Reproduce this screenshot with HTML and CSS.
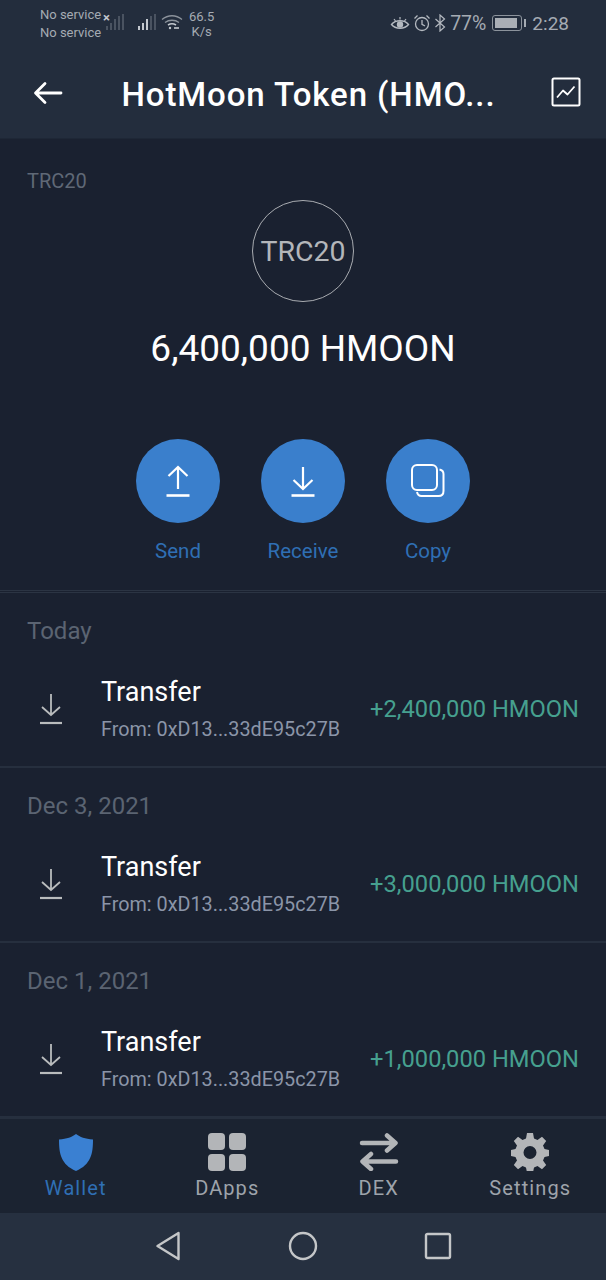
FILE: index.html
```html
<!DOCTYPE html>
<html lang="en">
<head>
  <meta charset="UTF-8" />
  <meta name="viewport" content="width=device-width, initial-scale=1.0" />
  <title>HotMoon Token</title>
  <link rel="stylesheet" href="styles.css">
</head>
<body>
  <div class="phone">
    <header class="top">
      <div class="status-bar">
        <div class="status-left">
          <div class="carrier">
            <span>No service</span>
            <span>No service</span>
          </div>
          <span class="no-sim">×</span>
          <svg class="signal signal-off" viewBox="0 0 20 18" width="20" height="18">
            <rect x="1" y="13" width="2" height="4"/><rect x="5" y="10" width="2" height="7"/><rect x="9" y="6" width="2" height="11"/><rect x="13" y="3" width="2" height="14"/><rect x="17" y="1" width="2" height="16"/>
          </svg>
          <svg class="signal" viewBox="0 0 20 18" width="20" height="18">
            <rect x="1" y="13" width="2" height="4" fill="#c3c8cf"/><rect x="5" y="10" width="2" height="7" fill="#c3c8cf"/><rect x="9" y="6" width="2" height="11" fill="#c3c8cf"/><rect x="13" y="3" width="2" height="14"/><rect x="17" y="1" width="2" height="16"/>
          </svg>
          <svg class="wifi" viewBox="0 0 24 18" width="24" height="18" fill="none" stroke="#8c939c" stroke-width="1.3">
            <path d="M2 6.500c6-5 14-5 20 0"/>
            <path d="M5 9.500c4-3 10-3 14 0"/>
            <path d="M8 12c2.500-1.500 5.500-1.500 8 0" stroke="#c3c8cf" stroke-width="1.600"/>
            <circle cx="10" cy="15" r="1.200" fill="#c3c8cf" stroke="none"/>
            <path d="M14 15h5" stroke="#c3c8cf" stroke-width="1.600"/>
          </svg>
          <div class="speed">
            <span>66.5</span>
            <span>K/s</span>
          </div>
        </div>
        <div class="status-right">
          <svg viewBox="0 0 20 16" width="20" height="16" fill="none" stroke="#b4b9c0" stroke-width="1.400">
            <path d="M1.500 9.500c4-5 13-5 17 0c-4 5-13 5-17 0z"/>
            <circle cx="10" cy="9.500" r="3.200" fill="#b4b9c0" stroke="none"/>
            <path d="M4 4l1.500 2M10 2v2.500M16 4l-1.500 2" stroke-width="1.200"/>
          </svg>
          <svg viewBox="0 0 18 18" width="18" height="18" fill="none" stroke="#b4b9c0" stroke-width="1.300">
            <circle cx="9" cy="10" r="6.500"/>
            <path d="M9 6v4.300l3 1.700"/>
            <path d="M1.500 4.500l3-3M16.500 4.500l-3-3"/>
          </svg>
          <svg viewBox="0 0 12 18" width="12" height="18" fill="none" stroke="#b4b9c0" stroke-width="1.200">
            <path d="M1.500 5l9 8-4.500 4V1l4.500 4-9 8"/>
          </svg>
          <span class="battery-pct">77%</span>
          <div class="battery"><div class="battery-level"></div></div>
          <div class="battery-tip"></div>
          <span class="clock">2:28</span>
        </div>
      </div>
      <div class="title-bar">
        <svg class="back" viewBox="0 0 30 24" width="30" height="24" fill="none" stroke="#fff" stroke-width="2.800" stroke-linecap="round" stroke-linejoin="round">
          <path d="M28 12H3M12 2.500L2.500 12l9.500 9.500"/>
        </svg>
        <h1>HotMoon Token (HMO...</h1>
        <svg class="chart" viewBox="0 0 30 30" width="30" height="30" fill="none" stroke="#fff" stroke-width="2" stroke-linejoin="round">
          <rect x="1.500" y="1.500" width="27" height="27" rx="1.500"/>
          <path d="M6 20.500l6-7 4.500 4 7-8" stroke-width="1.800"/>
        </svg>
      </div>
    </header>

    <main class="content">
      <section class="summary">
        <div class="network">TRC20</div>
        <div class="coin">TRC20</div>
        <div class="balance">6,400,000 HMOON</div>
        <div class="actions">
          <div class="action">
            <div class="action-circle">
              <svg viewBox="0 0 26 34" width="26" height="34" fill="none" stroke="#fff" stroke-width="2.200">
                <path d="M13 25V3M3.500 12L13 3l9.500 9"/>
                <path d="M1.500 31.500h23" stroke-width="2.600"/>
              </svg>
            </div>
            <span>Send</span>
          </div>
          <div class="action">
            <div class="action-circle">
              <svg viewBox="0 0 26 34" width="26" height="34" fill="none" stroke="#fff" stroke-width="2.200">
                <path d="M13 3v22M3.500 16l9.500 9 9.500-9"/>
                <path d="M1.500 31.500h23" stroke-width="2.600"/>
              </svg>
            </div>
            <span>Receive</span>
          </div>
          <div class="action">
            <div class="action-circle">
              <svg viewBox="0 0 36 36" width="36" height="36" fill="none" stroke="#fff" stroke-width="2">
                <rect x="2" y="2" width="25" height="25" rx="5"/>
                <path d="M29.500 6.500c2.500.5 4 2 4 4.500v17c0 3-2 5-5 5h-17c-2.500 0-4-1.500-4.500-4"/>
              </svg>
            </div>
            <span>Copy</span>
          </div>
        </div>
      </section>

      <section class="day">
        <div class="day-label">Today</div>
        <div class="tx">
          <svg class="tx-icon" viewBox="0 0 24 34" width="24" height="34" fill="none" stroke="#b9bcbd" stroke-width="1.800">
            <path d="M12 2v21M3 15l9 8 9-8"/>
            <path d="M1 31h22" stroke-width="2.200"/>
          </svg>
          <div class="tx-text">
            <div class="tx-title">Transfer</div>
            <div class="tx-from">From: 0xD13...33dE95c27B</div>
          </div>
          <div class="tx-amount">+2,400,000 HMOON</div>
        </div>
      </section>

      <section class="day">
        <div class="day-label">Dec 3, 2021</div>
        <div class="tx">
          <svg class="tx-icon" viewBox="0 0 24 34" width="24" height="34" fill="none" stroke="#b9bcbd" stroke-width="1.800">
            <path d="M12 2v21M3 15l9 8 9-8"/>
            <path d="M1 31h22" stroke-width="2.200"/>
          </svg>
          <div class="tx-text">
            <div class="tx-title">Transfer</div>
            <div class="tx-from">From: 0xD13...33dE95c27B</div>
          </div>
          <div class="tx-amount">+3,000,000 HMOON</div>
        </div>
      </section>

      <section class="day">
        <div class="day-label">Dec 1, 2021</div>
        <div class="tx">
          <svg class="tx-icon" viewBox="0 0 24 34" width="24" height="34" fill="none" stroke="#b9bcbd" stroke-width="1.800">
            <path d="M12 2v21M3 15l9 8 9-8"/>
            <path d="M1 31h22" stroke-width="2.200"/>
          </svg>
          <div class="tx-text">
            <div class="tx-title">Transfer</div>
            <div class="tx-from">From: 0xD13...33dE95c27B</div>
          </div>
          <div class="tx-amount">+1,000,000 HMOON</div>
        </div>
      </section>
    </main>

    <nav class="tabs">
      <div class="tab tab-active">
        <svg viewBox="0 0 36 38" width="36" height="38">
          <path d="M18 1c4 3 9 5 17 5.500c0 14-2 25-17 31.500C3 31.500 1 20.500 1 6.500C9 6 14 4 18 1z" fill="#3a80d2"/>
        </svg>
        <span>Wallet</span>
      </div>
      <div class="tab">
        <svg viewBox="0 0 38 38" width="38" height="38" fill="#b3b5b8">
          <rect x="0" y="0" width="17" height="17" rx="4"/><rect x="21" y="0" width="17" height="17" rx="4"/>
          <rect x="0" y="21" width="17" height="17" rx="4"/><rect x="21" y="21" width="17" height="17" rx="4"/>
        </svg>
        <span>DApps</span>
      </div>
      <div class="tab">
        <svg viewBox="0 0 40 38" width="40" height="38" fill="none" stroke="#b3b5b8" stroke-width="4.500" stroke-linecap="round" stroke-linejoin="round">
          <path d="M3 10h33M28 2.500L36.500 10 28 17.500"/>
          <path d="M37 28.500H4M12 21l-8.500 7.500L12 36"/>
        </svg>
        <span>DEX</span>
      </div>
      <div class="tab">
        <svg viewBox="0 0 38 38" width="38" height="38">
          <path fill="#b3b5b8" fill-rule="evenodd" d="M16 0h6l1 5.500 3.500 1.500 4.500-3.200 4.200 4.200L32 12.500l1.500 3.500 4.500 1v6l-4.500 1-1.500 3.500 3.200 4.500-4.200 4.200-4.500-3.200-3.500 1.500-1 5h-6l-1-5-3.500-1.500-4.500 3.200-4.200-4.200L6 27.500 4.500 24 0 23v-6l4.500-1L6 12.500 2.800 8l4.200-4.200L11.500 7 15 5.500zM19 13a6.500 6.500 0 1 0 0 13 6.500 6.500 0 0 0 0-13z"/>
        </svg>
        <span>Settings</span>
      </div>
    </nav>

    <footer class="android-nav">
      <svg viewBox="0 0 26 30" width="26" height="30" fill="none" stroke="#c4c6c8" stroke-width="2.400" stroke-linejoin="round">
        <path d="M23.500 2L2.500 15l21 13z"/>
      </svg>
      <svg viewBox="0 0 30 30" width="30" height="30" fill="none" stroke="#c4c6c8" stroke-width="2.400">
        <circle cx="15" cy="15" r="13"/>
      </svg>
      <svg viewBox="0 0 28 28" width="28" height="28" fill="none" stroke="#c4c6c8" stroke-width="2.400" stroke-linejoin="round">
        <rect x="2" y="2" width="24" height="24" rx="1.500"/>
      </svg>
    </footer>
  </div>
</body>
</html>
```

FILE: styles.css
```css
* {
  box-sizing: border-box;
}

body {
  margin: 0;
  background-color: #1a2130;
  font-family: Roboto, "Liberation Sans", sans-serif;
  overflow: hidden;
}

.phone {
  width: 606px;
  height: 1280px;
  display: flex;
  flex-direction: column;
}

/* top bars */
.top {
  height: 139px;
  flex-shrink: 0;
  background-color: #232d3d;
  border-bottom: 1px solid #1e2736;
}

.status-bar {
  height: 46px;
  padding: 6px 37px 0 40px;
  display: flex;
  justify-content: space-between;
}

.status-left {
  display: flex;
  align-items: flex-start;
}

.carrier {
  display: flex;
  flex-direction: column;
  font-size: 13px;
  line-height: 18px;
  color: #a5abb3;
  width: 63px;
  white-space: nowrap;
}

.no-sim {
  font-size: 13px;
  font-weight: bold;
  line-height: 18px;
  margin-top: 3px;
  color: #c3c8cf;
}

.signal {
  fill: #4a5361;
  margin-top: 7px;
}

.signal-off {
  margin-left: -5px;
  margin-right: 12px;
}

.wifi {
  margin: 7px 0 0 3px;
}

.speed {
  display: flex;
  flex-direction: column;
  align-items: center;
  margin: 3px 0 0 5px;
  font-size: 13px;
  line-height: 15px;
  color: #a5abb3;
}

.status-right {
  display: flex;
  align-items: center;
  height: 34px;
  gap: 3px;
}

.battery-pct {
  margin-left: 1px;
  font-size: 19.500px;
  color: #a5abb3;
}

.battery {
  width: 30px;
  height: 16px;
  margin-left: 3px;
  padding: 2px;
  border: 1px solid #8c939c;
  border-radius: 3px;
}

.battery-level {
  width: 22px;
  height: 100%;
  background-color: #a9aeb5;
}

.battery-tip {
  width: 2px;
  height: 8px;
  margin-left: -1px;
  background-color: #a5abb3;
}

.clock {
  margin-left: 3px;
  font-size: 19px;
  color: #a5abb3;
}

.title-bar {
  height: 93px;
  padding: 0 25px 0 33px;
  display: flex;
  align-items: center;
}

.back {
  flex-shrink: 0;
}

.title-bar h1 {
  flex: 1;
  margin: 4px 0 0 3px;
  text-align: center;
  font-size: 33px;
  font-weight: 500;
  letter-spacing: 0.9px;
  color: #fff;
  white-space: nowrap;
}

.chart {
  flex-shrink: 0;
  margin-top: -2px;
}

/* token summary */
.content {
  flex: 1;
  overflow: hidden;
}

.summary {
  height: 454px;
  padding-top: 30px;
  display: flex;
  flex-direction: column;
  align-items: center;
  border-bottom: 3px double #2b3443;
}

.network {
  align-self: flex-start;
  margin-left: 27px;
  font-size: 20px;
  line-height: 24px;
  color: #5f6876;
}

.coin {
  width: 102px;
  height: 102px;
  margin-top: 7px;
  padding-top: 1px;
  display: flex;
  align-items: center;
  justify-content: center;
  border: 1px solid #a9acb1;
  border-radius: 50%;
  font-size: 28.500px;
  color: #b3b6ba;
}

.balance {
  margin-top: 24px;
  font-size: 37px;
  line-height: 46px;
  color: #fff;
}

.actions {
  margin-top: 67px;
  display: flex;
  gap: 41px;
}

.action {
  width: 84px;
  display: flex;
  flex-direction: column;
  align-items: center;
  font-size: 20.500px;
  line-height: 24px;
  color: #2f6fb4;
}

.action span {
  margin-top: 16px;
}

.action-circle {
  width: 84px;
  height: 84px;
  display: flex;
  align-items: center;
  justify-content: center;
  border-radius: 50%;
  background-color: #3a7fcc;
}

/* transaction list */
.day {
  height: 175px;
  padding: 25px 27px 0;
  border-bottom: 2px solid #262f3e;
}

.day-label {
  font-size: 24px;
  line-height: 26px;
  color: #5b6472;
}

.tx {
  margin-top: 32px;
  display: flex;
  align-items: center;
}

.tx-icon {
  flex-shrink: 0;
  margin-left: 12px;
}

.tx-text {
  margin-left: 38px;
}

.tx-title {
  font-size: 27px;
  line-height: 32px;
  color: #fff;
}

.tx-from {
  margin-top: 10px;
  font-size: 19.800px;
  line-height: 24px;
  color: #8b95a8;
  white-space: nowrap;
}

.tx-amount {
  margin-left: auto;
  font-size: 23.700px;
  color: #46a08f;
  white-space: nowrap;
}

/* bottom tabs */
.tabs {
  height: 95px;
  flex-shrink: 0;
  padding-top: 14px;
  display: flex;
  background-color: #1b2331;
  border-top: 1px solid #262f3e;
}

.tab {
  flex: 1;
  display: flex;
  flex-direction: column;
  align-items: center;
  font-size: 20px;
  line-height: 24px;
  letter-spacing: 1.100px;
  color: #9ea3ab;
}

.tab span {
  margin-top: 5px;
}

.tab-active {
  color: #2f6fb4;
}

.android-nav {
  height: 67px;
  flex-shrink: 0;
  padding: 0 154px 2px 155px;
  display: flex;
  align-items: center;
  justify-content: space-between;
  background-color: #263040;
}
```
